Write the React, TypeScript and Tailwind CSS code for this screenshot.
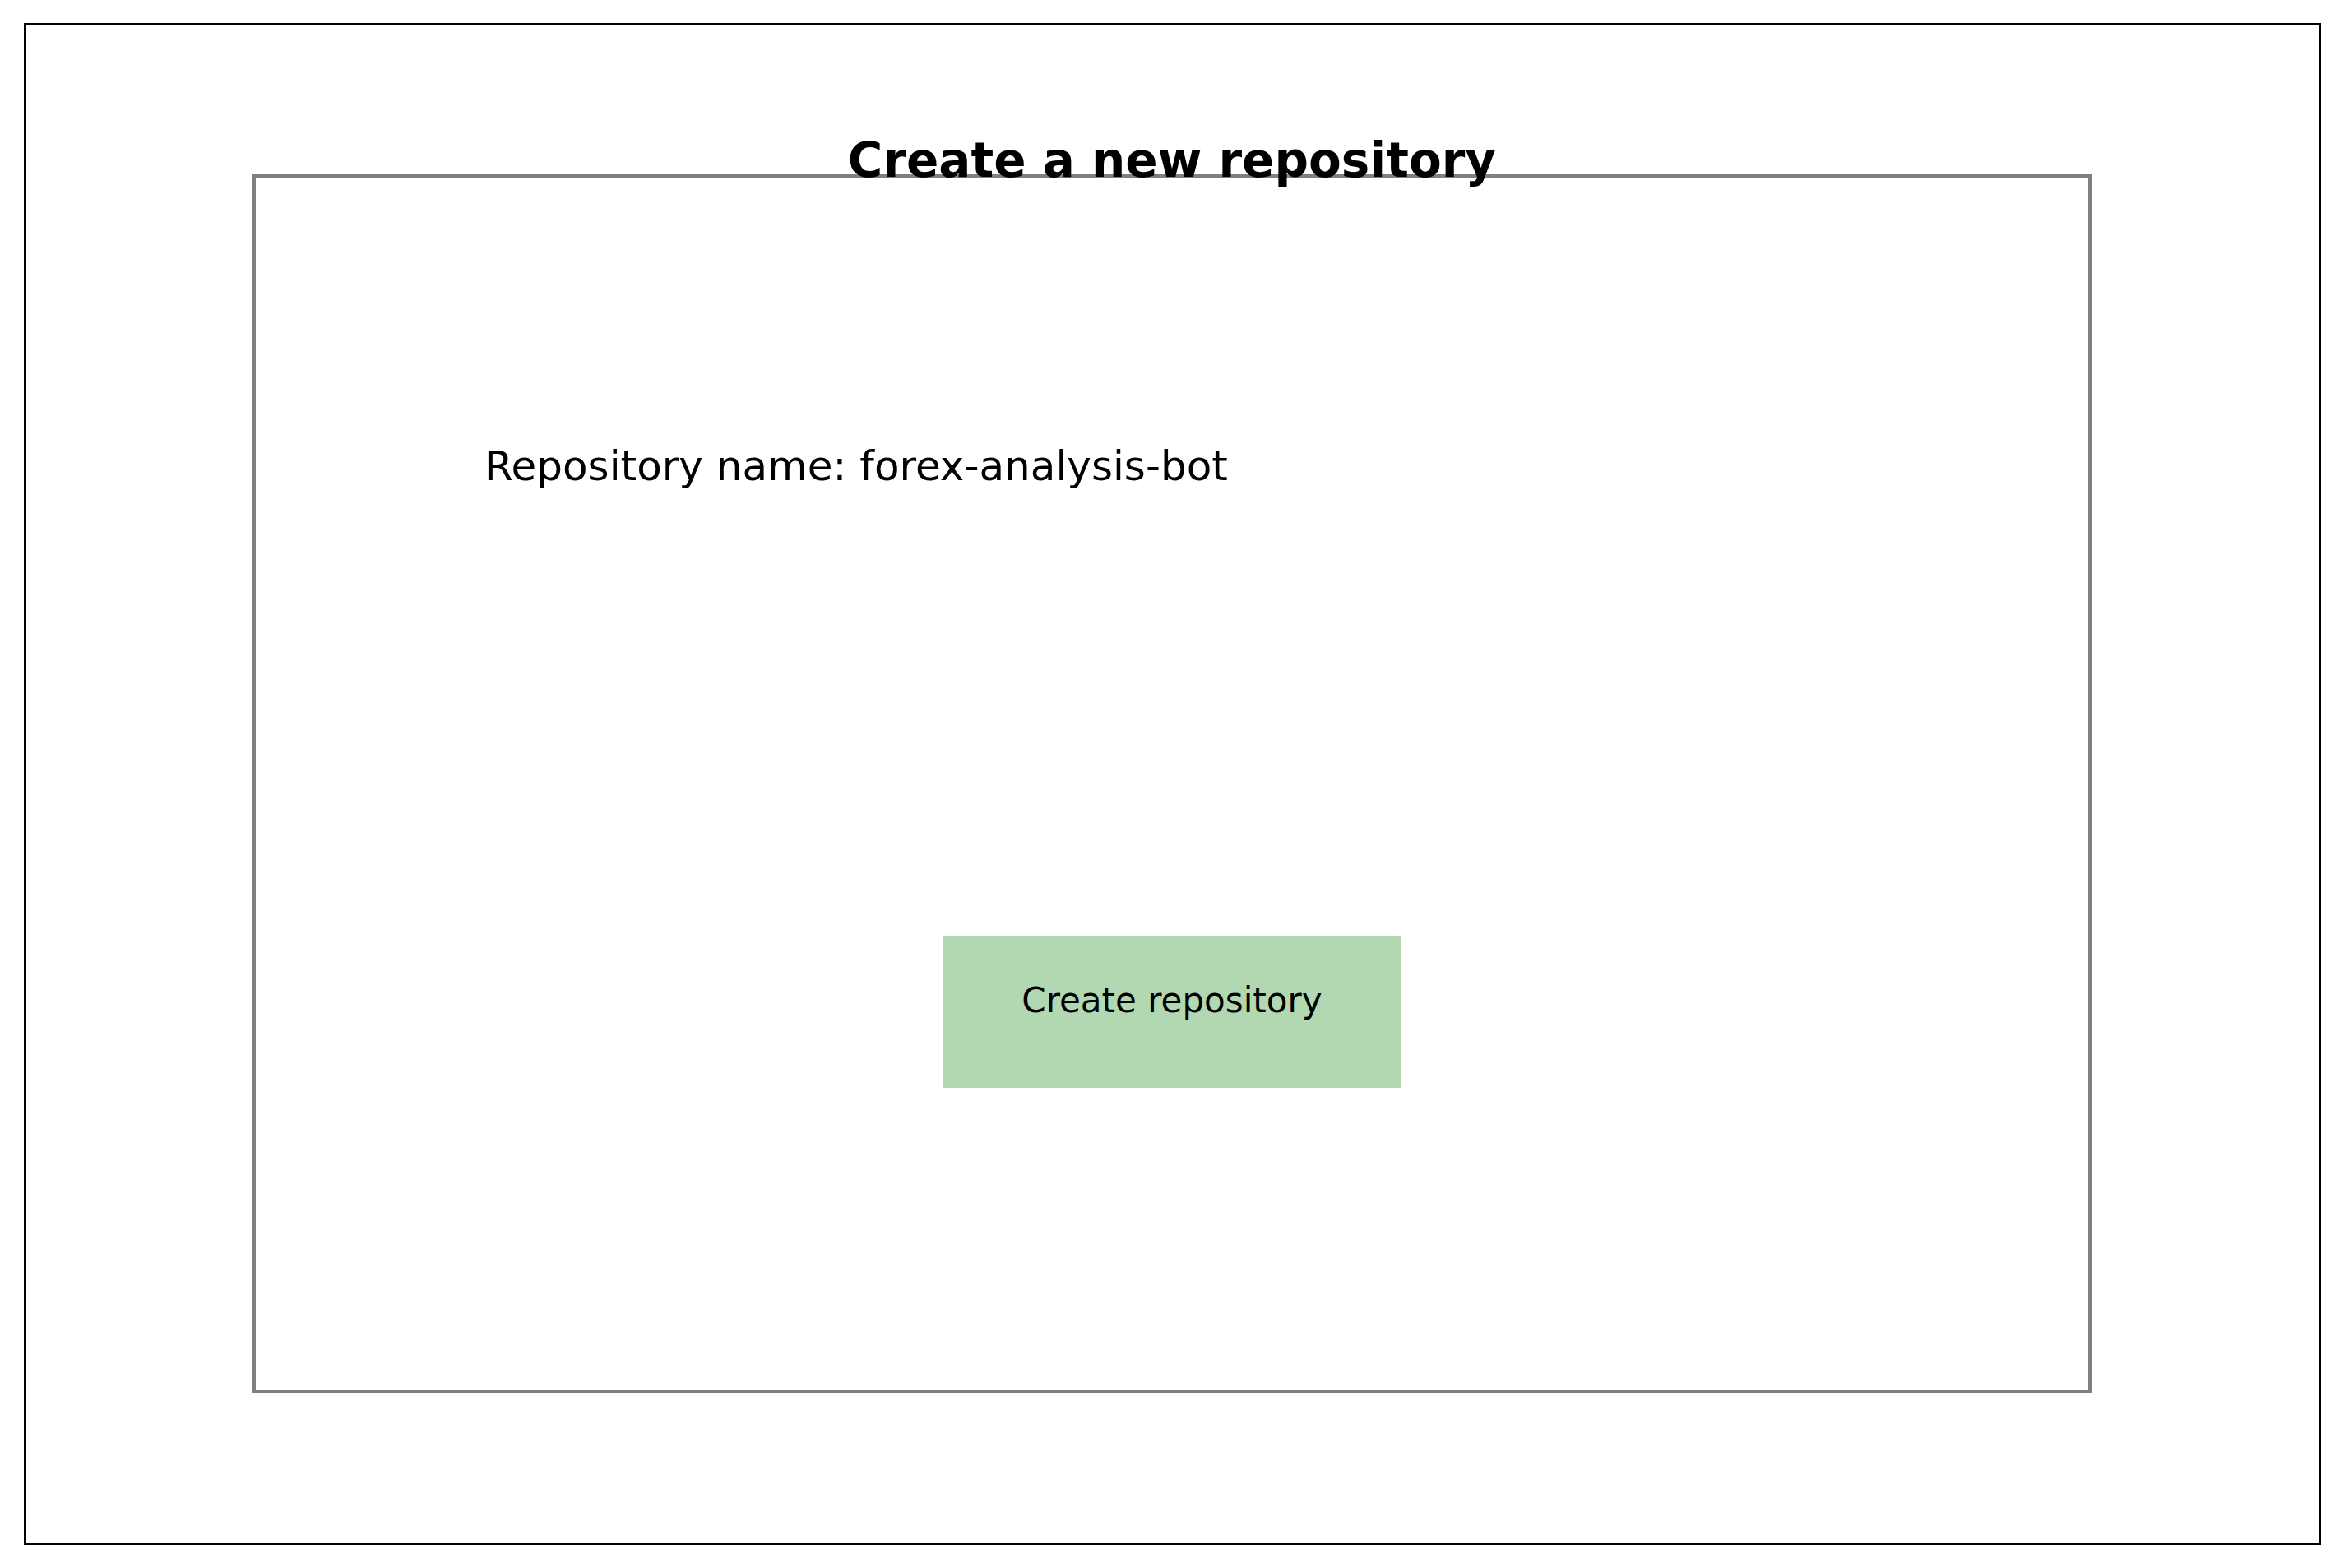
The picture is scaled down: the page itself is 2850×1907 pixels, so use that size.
export default function App() {
  return (
    <div className="flex min-h-screen bg-white p-7 pl-[29px] font-['DejaVu_Sans',sans-serif] text-black">
      <main className="flex flex-1 flex-col border-[3px] border-black pt-[130px] pr-[276px] pb-[182px] pl-[275px]">
        <h1 className="relative z-10 -mb-[17px] text-center text-[58px] leading-[68px] font-bold">
          Create a new repository
        </h1>
        <form
          className="flex flex-1 flex-col border-4 border-[#808080] pt-[322px] pb-[367px]"
          onSubmit={(event) => event.preventDefault()}
        >
          <p className="pl-[278px] text-[50px] leading-[58px]">
            Repository name: forex-analysis-bot
          </p>
          <button
            type="submit"
            className="mx-auto mt-[542px] cursor-pointer bg-[#b2d8b2] px-24 pt-[54px] pb-[82px] text-[42px] leading-[49px] whitespace-nowrap"
          >
            Create repository
          </button>
        </form>
      </main>
    </div>
  );
}
